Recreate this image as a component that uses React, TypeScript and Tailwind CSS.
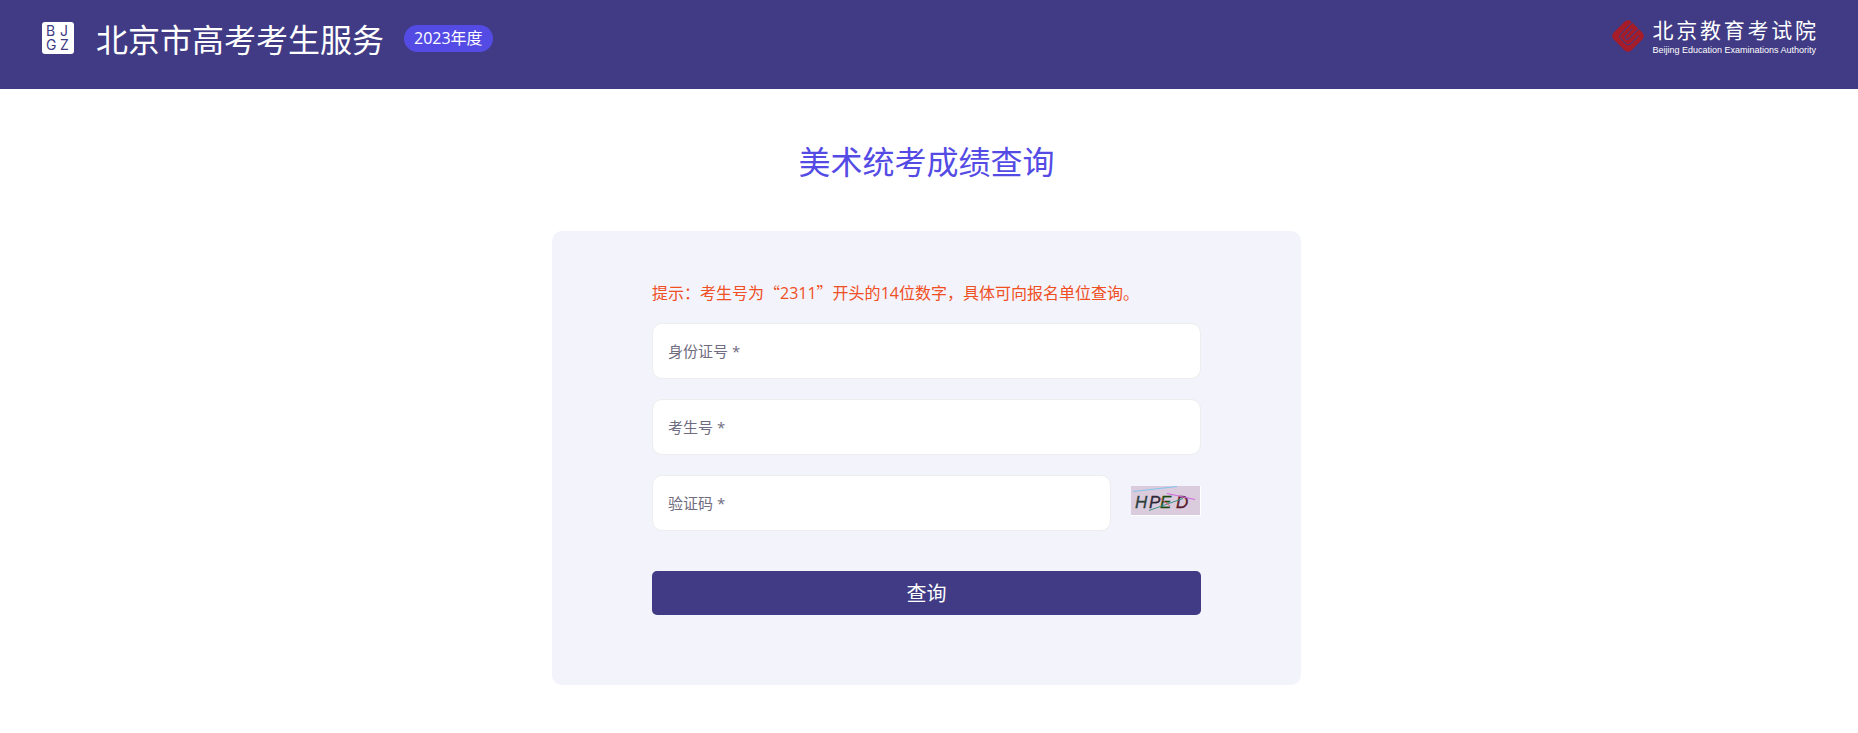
import { useState } from 'react';
import type { FormEvent } from 'react';

const authorityName = '北京教育考试院';

function Logo() {
    return (
        <svg className="size-8 shrink-0" viewBox="0 0 32 32" aria-hidden="true">
            <rect x="0" y="0" width="32" height="32" rx="3" fill="#fff" />
            <g fill="#403b84" fontFamily="Inter, sans-serif" fontSize="14">
                <text x="4" y="14">B</text>
                <text x="18" y="14">J</text>
                <text x="4" y="28">G</text>
                <text x="18" y="28">Z</text>
            </g>
        </svg>
    );
}

function Emblem() {
    return (
        <svg className="size-8 shrink-0" viewBox="0 0 32 32" aria-hidden="true">
            <g transform="rotate(45 16 16)">
                <rect x="3.500" y="3.500" width="25" height="25" rx="4.500" fill="#a61c28" />
                <g fill="none" stroke="#403b84" strokeWidth="1">
                    <path d="M9.500 3 V19 Q9.500 23 13.500 23 H19 Q23.500 23 23.500 19 V8" />
                    <path d="M14 8 V17 Q14 19.500 16.250 19.500 Q18.500 19.500 18.500 17 V3" />
                </g>
            </g>
        </svg>
    );
}

function Captcha() {
    return (
        <svg className="h-[30px] w-[70px]" viewBox="0 0 70 30" role="img" aria-label="验证码图片">
            <rect width="70" height="30" fill="#fff" />
            <rect width="69" height="29" fill="#dacbdd" />
            <g fontFamily="'Liberation Sans', sans-serif" fontSize="17" fontStyle="italic" strokeWidth="0.300">
                <text x="4" y="22" fill="#2c3f3d" stroke="#2c3f3d">H</text>
                <text x="18" y="22" fill="#2d2838" stroke="#2d2838">P</text>
                <text x="29" y="22" fill="#1c4a0c" stroke="#1c4a0c">E</text>
                <text x="45" y="22" fill="#571c2b" stroke="#571c2b">D</text>
            </g>
            <g fill="none" strokeWidth="1">
                <path d="M2 5.500 L46 0.500" stroke="#83c5ee" />
                <path d="M36 7.500 L64 13.500" stroke="#d068dc" />
                <path d="M18 24.500 L52 12.500" stroke="#3f9388" />
                <path d="M29 12 L39 20" stroke="#dc5468" />
            </g>
        </svg>
    );
}

function Header() {
    return (
        <header className="flex h-[89px] items-start justify-between bg-[#403b84] px-[42px] text-white">
            <div className="flex items-center pt-4">
                <Logo />
                <h1 className="ml-[22px] font-['Noto_Sans_CJK_SC',sans-serif] text-[32px] leading-[44px]">北京市高考考生服务</h1>
                <span className="ml-5 rounded-full bg-[#544be5] px-[10px] text-base leading-[27px]">2023年度</span>
            </div>
            <div className="flex items-start gap-2 pt-5">
                <Emblem />
                <div>
                    <div className="flex justify-between text-[21px] leading-5">
                        {authorityName.split('').map((char, index) => (
                            <span key={index}>{char}</span>
                        ))}
                    </div>
                    <p className="mt-1 font-['Liberation_Sans',sans-serif] text-[9px] leading-3 whitespace-nowrap">Beijing Education Examinations Authority</p>
                </div>
            </div>
        </header>
    );
}

type FieldProps = {
    name: string;
    label: string;
    value: string;
    onChange: (value: string) => void;
};

function Field({ name, label, value, onChange }: FieldProps) {
    return (
        <input
            type="text"
            name={name}
            aria-label={label}
            placeholder={`${label} *`}
            value={value}
            onChange={(e) => onChange(e.target.value)}
            className="h-14 w-full min-w-0 rounded-[10px] border border-[#ededed] bg-white px-[15px] text-[15px] text-[#403b84] placeholder:text-[#6f6b80] focus:border-[#544be5] focus:outline-none"
            required
        />
    );
}

export default function App() {
    const [idCard, setIdCard] = useState('');
    const [examNumber, setExamNumber] = useState('');
    const [code, setCode] = useState('');

    const handleSubmit = (e: FormEvent) => {
        e.preventDefault();
    };

    return (
        <div className="min-h-screen bg-white font-['Open_Sans','Noto_Sans_CJK_SC',sans-serif]">
            <Header />
            <main className="flex flex-col items-center pr-[5px] pt-12 pb-12">
                <h2 className="text-[32px] leading-[50px] text-[#544be5]">美术统考成绩查询</h2>
                <form onSubmit={handleSubmit} className="mt-11 flex w-full max-w-[749px] flex-col rounded-[10px] bg-[#f2f3fb] px-6 pt-12 pb-[70px] md:px-[100px]">
                    <p className="font-['Noto_Sans_CJK_SC',sans-serif] text-base leading-[26px] text-[#f04e23]">
                        提示：考生号为“<span className="font-['Open_Sans',sans-serif]">2311</span>”开头的<span className="font-['Open_Sans',sans-serif]">14</span>位数字，具体可向报名单位查询。
                    </p>
                    <div className="mt-[17px] flex flex-col gap-5">
                        <Field name="idCard" label="身份证号" value={idCard} onChange={setIdCard} />
                        <Field name="examNumber" label="考生号" value={examNumber} onChange={setExamNumber} />
                        <div className="flex items-center gap-5">
                            <Field name="code" label="验证码" value={code} onChange={setCode} />
                            <button type="button" className="shrink-0 cursor-pointer pb-1" onClick={() => setCode('')}>
                                <Captcha />
                            </button>
                        </div>
                    </div>
                    <button type="submit" className="mt-10 h-11 cursor-pointer rounded-[5px] bg-[#403b84] font-['Noto_Sans_CJK_SC',sans-serif] text-xl text-white">查询</button>
                </form>
            </main>
        </div>
    );
}
